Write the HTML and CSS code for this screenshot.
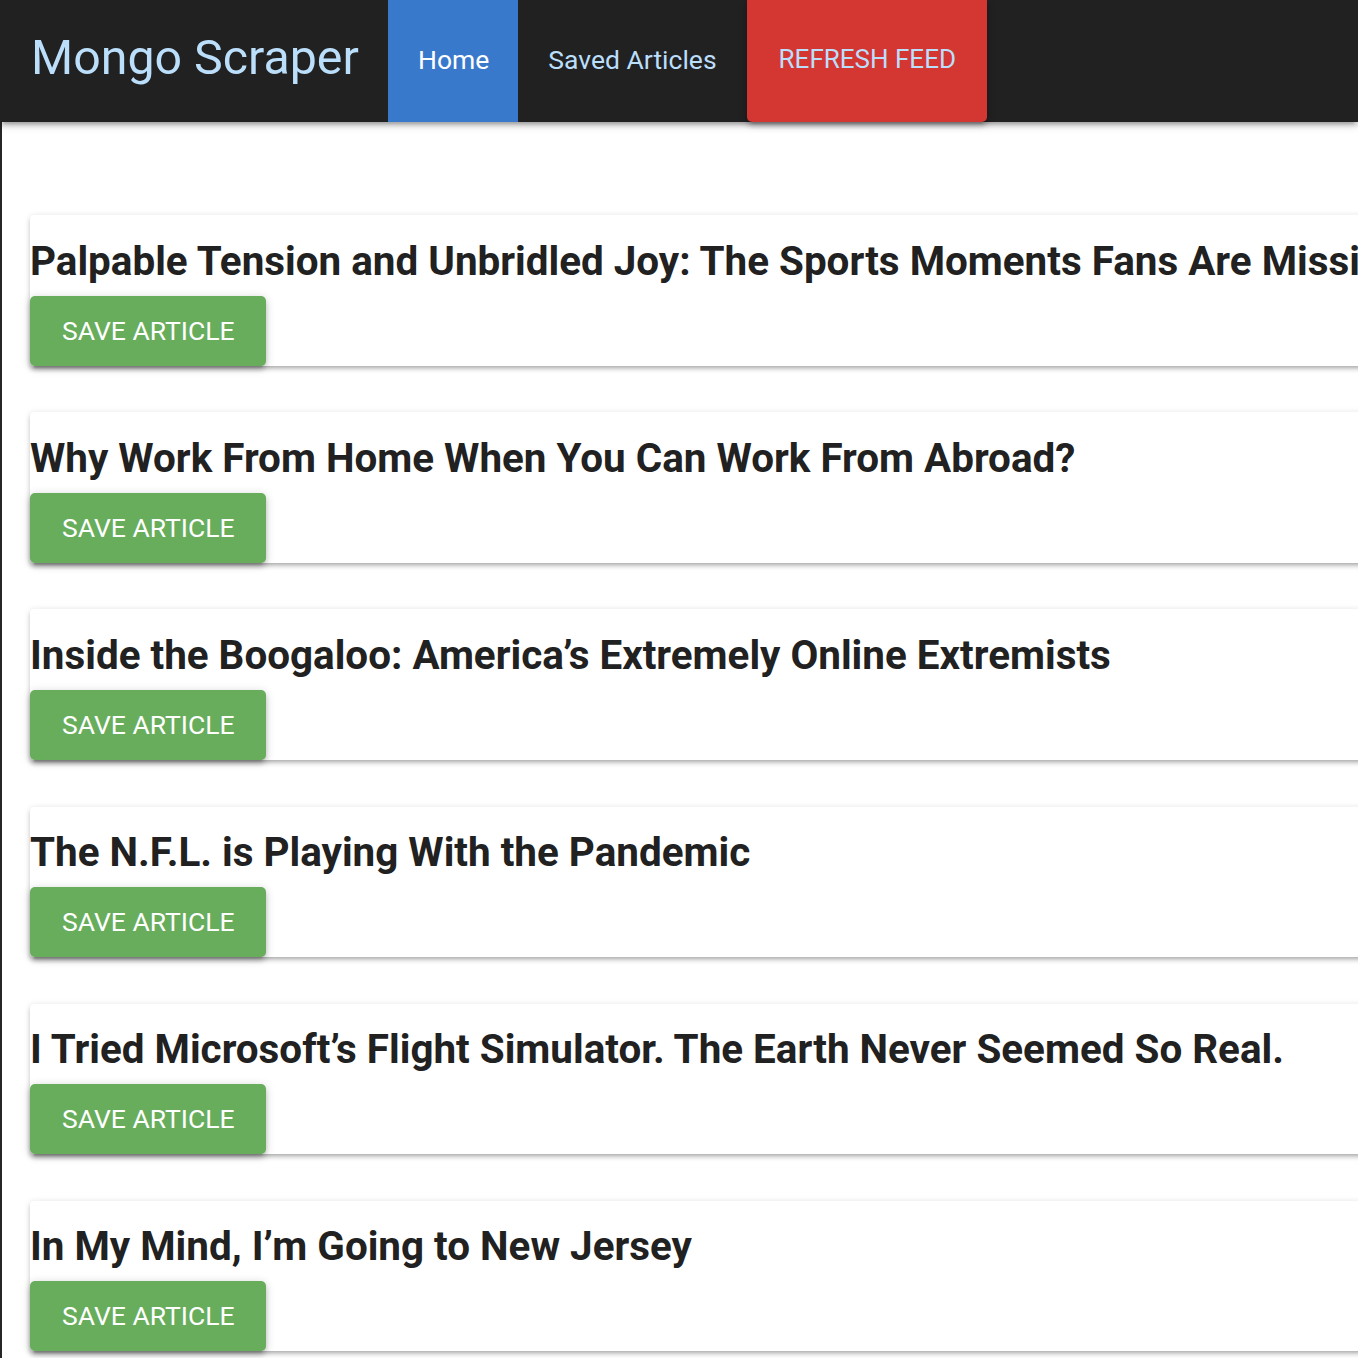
FILE: index.html
```html
<!DOCTYPE html>
<html lang="en">
<head>
<meta charset="utf-8">
<title>Mongo Scraper</title>
<link rel="stylesheet" href="styles.css">
</head>
<body>
<div class="page">
  <nav class="navbar">
    <a class="brand" href="#">Mongo Scraper</a>
    <ul class="nav-links">
      <li><a class="nav-link active" href="#">Home</a></li>
      <li><a class="nav-link" href="#">Saved Articles</a></li>
      <li><a class="nav-link refresh" href="#">REFRESH FEED</a></li>
    </ul>
  </nav>
  <main class="main">
    <div class="card">
      <h2 class="card-title">Palpable Tension and Unbridled Joy: The Sports Moments Fans Are Missing</h2>
      <a class="save-btn" href="#">Save Article</a>
    </div>
    <div class="card">
      <h2 class="card-title">Why Work From Home When You Can Work From Abroad?</h2>
      <a class="save-btn" href="#">Save Article</a>
    </div>
    <div class="card">
      <h2 class="card-title">Inside the Boogaloo: America’s Extremely Online Extremists</h2>
      <a class="save-btn" href="#">Save Article</a>
    </div>
    <div class="card">
      <h2 class="card-title">The N.F.L. is Playing With the Pandemic</h2>
      <a class="save-btn" href="#">Save Article</a>
    </div>
    <div class="card">
      <h2 class="card-title">I Tried Microsoft’s Flight Simulator. The Earth Never Seemed So Real.</h2>
      <a class="save-btn" href="#">Save Article</a>
    </div>
    <div class="card">
      <h2 class="card-title">In My Mind, I’m Going to New Jersey</h2>
      <a class="save-btn" href="#">Save Article</a>
    </div>
  </main>
</div>
</body>
</html>
```
FILE: styles.css
```css
html, body {
  margin: 0;
  padding: 0;
  background: #ffffff;
  overflow: hidden;
}

body {
  font-family: Roboto, "Noto Sans", Arial, sans-serif;
}

.page {
  width: 1358px;
  height: 1358px;
  overflow: hidden;
  display: flex;
  flex-direction: column;
}

.navbar {
  flex: 0 0 auto;
  height: 122px;
  background: #212121;
  display: flex;
  align-items: stretch;
  position: relative;
  z-index: 2;
  box-shadow: 0 4px 4px 0 rgba(0,0,0,0.14), 0 6px 2px -4px rgba(0,0,0,0.12), 0 2px 10px 0 rgba(0,0,0,0.2);
}

.brand {
  display: flex;
  align-items: center;
  width: 388px;
  box-sizing: border-box;
  padding: 0 0 7px 31px;
  color: #bbdefb;
  font-size: 48.3px;
  font-weight: 400;
  text-decoration: none;
  white-space: nowrap;
}

.nav-links {
  list-style: none;
  margin: 0;
  padding: 0;
  display: flex;
  align-items: stretch;
}

.nav-links li {
  display: flex;
}

.nav-link {
  display: flex;
  align-items: center;
  padding: 0 30px 4px 30px;
  color: #bbdefb;
  font-size: 26.5px;
  text-decoration: none;
  white-space: nowrap;
}

.nav-link.active {
  background: #3979cc;
  color: #ffffff;
  padding: 0 29px 4px 30px;
}

.nav-link.refresh {
  background: #d43731;
  width: 240px;
  box-sizing: border-box;
  padding: 0 0 4px 32px;
  font-size: 26px;
  border-radius: 0 0 5px 5px;
  box-shadow: 0 4px 4px 0 rgba(0,0,0,0.14), 0 6px 2px -4px rgba(0,0,0,0.12), 0 2px 10px 0 rgba(0,0,0,0.2);
}

.main {
  flex: 1 1 auto;
  border-left: 2px solid #262626;
  padding: 93px 0 0 28px;
  display: flex;
  flex-direction: column;
  gap: 46.7px;
}

.card {
  width: 1500px;
  background: #ffffff;
  border-radius: 4px;
  padding-top: 22.5px;
  display: flex;
  flex-direction: column;
  align-items: flex-start;
  box-shadow: 0 4px 4px 0 rgba(0,0,0,0.12), 0 6px 2px -4px rgba(0,0,0,0.1), 0 1px 6px 0 rgba(0,0,0,0.14);
}

.card-title {
  margin: 0 0 10px 0;
  font-size: 40.4px;
  line-height: 48px;
  font-weight: 700;
  color: #212121;
  white-space: nowrap;
}

.save-btn {
  display: flex;
  align-items: center;
  width: 236px;
  height: 70px;
  box-sizing: border-box;
  padding: 0 0 1px 32px;
  background: #67ad5c;
  color: #ffffff;
  font-size: 26.5px;
  text-transform: uppercase;
  text-decoration: none;
  border-radius: 5px;
  box-shadow: 0 4px 4px 0 rgba(0,0,0,0.14), 0 6px 2px -4px rgba(0,0,0,0.12), 0 2px 10px 0 rgba(0,0,0,0.2);
}
```
